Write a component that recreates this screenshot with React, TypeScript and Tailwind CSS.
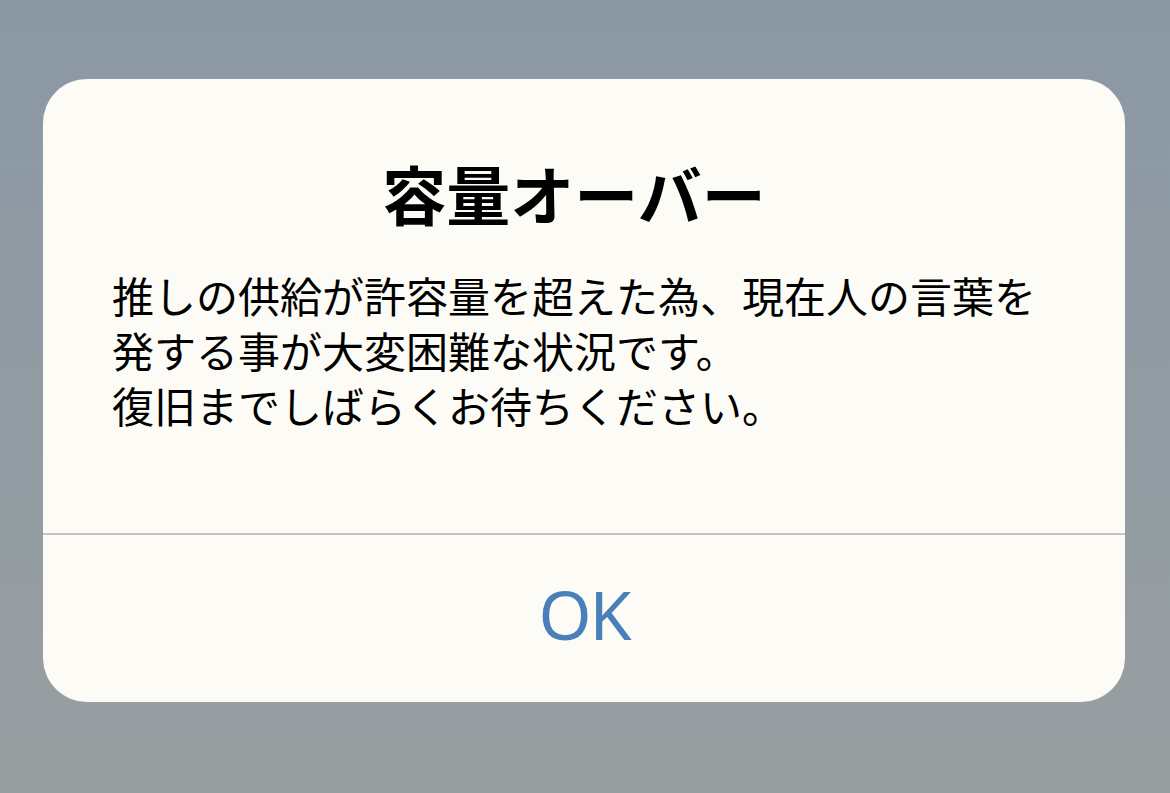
export default function App() {
  return (
    <div className="w-[1170px] h-[793px] bg-gradient-to-b from-[#8b98a4] to-[#989fa1] pt-[79px] pl-[43px]">
      <div className="w-[1082px] h-[623px] bg-[#fcfbf5] rounded-[44px] flex flex-col overflow-hidden">
        <div className="pt-[71px] px-[69px] h-[454px]">
          <div className="h-[84px] leading-[84px] text-center pr-[20px] text-[64px] font-bold text-black font-['Noto_Sans_CJK_JP',sans-serif]">
            容量オーバー
          </div>
          <div className="mt-[33px] text-[42px] leading-[55px] text-black whitespace-nowrap font-['Noto_Sans_CJK_JP',sans-serif]">
            推しの供給が許容量を超えた為、現在人の言葉を
            <br />
            発する事が大変困難な状況です。
            <br />
            復旧までしばらくお待ちください。
          </div>
        </div>
        <div className="h-[2px] bg-[#c4c3bf]" />
        <div className="flex-1 flex items-center justify-center pb-[10px]">
          <span className="text-[68px] leading-none text-[#4a80b9] font-['Noto_Sans','Noto_Sans_CJK_JP',sans-serif] tracking-[-2px]">
            OK
          </span>
        </div>
      </div>
    </div>
  );
}
